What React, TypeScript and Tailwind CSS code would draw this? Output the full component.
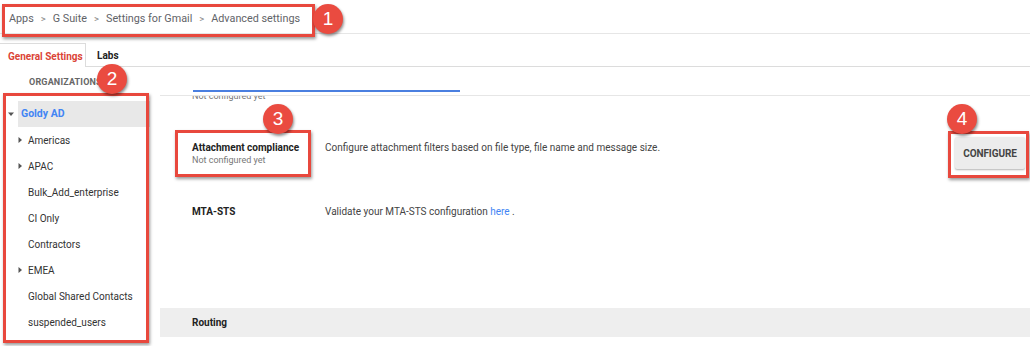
import React from "react";

const tree: { label: string; caret?: boolean }[] = [
  { label: "Americas", caret: true },
  { label: "APAC", caret: true },
  { label: "Bulk_Add_enterprise" },
  { label: "CI Only" },
  { label: "Contractors" },
  { label: "EMEA", caret: true },
  { label: "Global Shared Contacts" },
  { label: "suspended_users" },
];

const crumbs = ["Apps", "G Suite", "Settings for Gmail", "Advanced settings"];

function Caret({ down }: { down?: boolean }) {
  return (
    <svg width="6" height="6" viewBox="0 0 6 6" className="text-[#555]">
      {down ? <path d="M0 1.5h6L3 5z" fill="currentColor" /> : <path d="M1.5 0v6L5 3z" fill="currentColor" />}
    </svg>
  );
}

function Badge({ n, className }: { n: number; className: string }) {
  return (
    <div
      className={
        "absolute flex h-[30px] w-[30px] items-center justify-center rounded-full bg-[#ea4b40] text-[19px] text-white shadow-[1px_2px_3px_rgba(0,0,0,0.45)] " +
        className
      }
      style={{ fontFamily: "'Liberation Sans', Arial, sans-serif" }}
    >
      {n}
    </div>
  );
}

function Frame({ className }: { className: string }) {
  return (
    <div
      className={
        "pointer-events-none absolute border-[3px] border-[#e8483d] shadow-[1px_2px_3px_rgba(0,0,0,0.4)] " + className
      }
    />
  );
}

export default function App() {
  return (
    <div
      className="relative h-[346px] w-[1030px] overflow-hidden bg-white text-[#333]"
      style={{ fontFamily: "Roboto, 'Liberation Sans', Arial, sans-serif" }}
    >
      {/* Breadcrumb */}
      <div className="flex h-[34px] items-center gap-[7px] border-b border-[#e6e6e6] pl-[9px] pt-[6px] text-[10.8px] text-[#5f6368]">
        {crumbs.map((c, i) => (
          <React.Fragment key={c}>
            {i > 0 && <span className="text-[9.5px] text-[#888]">&gt;</span>}
            <span>{c}</span>
          </React.Fragment>
        ))}
      </div>

      {/* Tabs */}
      <div className="mt-[9px] flex h-[24px] text-[10px] font-bold">
        <div className="flex w-[86px] items-center border-t border-r border-[#dcdcdc] pl-[8px] pt-[1px] text-[#db4437]">
          General Settings
        </div>
        <div className="flex flex-1 items-center border-b border-[#dcdcdc] pl-[11px] pt-[1px] text-[#222]">Labs</div>
      </div>

      <div className="flex">
        {/* Organizations tree */}
        <div className="w-[150px] shrink-0">
          <div className="flex h-[34px] items-center pb-[3px] pl-[29px] text-[9px] font-bold tracking-[0.02em] text-[#666]">
            ORGANIZATIONS
          </div>
          <div className="flex h-[26px] items-center">
            <div className="flex w-[18px] justify-center pl-[3px]">
              <Caret down />
            </div>
            <div className="flex h-full flex-1 items-center bg-[#e8e8e8] pl-[3px] text-[10.5px] font-bold text-[#4285f4]">
              Goldy AD
            </div>
          </div>
          {tree.map((t) => (
            <div key={t.label} className="flex h-[26px] items-center text-[10px] text-[#333]">
              <div className="flex w-[28px] justify-end pr-[5px]">{t.caret && <Caret />}</div>
              {t.label}
            </div>
          ))}
        </div>

        {/* Settings list */}
        <div className="flex-1 pl-[10px]">
          <div className="h-[29px] border-b border-[#e6e6e6] pt-[23px]">
            <div className="ml-[33px] h-[2px] w-[267px] bg-[#4a7fe0]" />
          </div>
          <div className="h-[34px] overflow-hidden">
            <div className="-mt-[6px] pl-[32px] text-[9px] leading-[12px] text-[#777]">Not configured yet</div>
          </div>

          <div className="flex h-[48px]">
            <div className="w-[165px] shrink-0 pl-[32px] pt-[12px]">
              <div className="text-[10px] font-bold leading-[12px] text-[#222]">Attachment compliance</div>
              <div className="text-[9px] leading-[12px] text-[#777]">Not configured yet</div>
            </div>
            <div className="pt-[12px] text-[10px] leading-[12px] text-[#444]">
              Configure attachment filters based on file type, file name and message size.
            </div>
            <button className="ml-auto mr-[5px] mt-[7px] h-[32px] w-[70px] rounded-[2px] bg-[#ececec] text-[10px] font-bold tracking-[-0.01em] text-[#444] shadow-[0_1px_2px_rgba(0,0,0,0.3)]">
              CONFIGURE
            </button>
          </div>

          <div className="flex pt-[28px]">
            <div className="w-[165px] shrink-0 pl-[32px] text-[10px] font-bold leading-[12px] text-[#222]">MTA-STS</div>
            <div className="text-[10px] leading-[12px] text-[#444]">
              Validate your MTA-STS configuration <span className="text-[#4285f4]">here</span> .
            </div>
          </div>

          <div className="mt-[90px] flex h-[29px] items-center bg-[#eeeeee] pl-[32px] text-[10px] font-bold text-[#222]">
            Routing
          </div>
        </div>
      </div>

      {/* Annotations */}
      <Frame className="left-[2px] top-[4px] h-[33px] w-[313px]" />
      <Frame className="left-[3px] top-[93px] h-[250px] w-[146px]" />
      <Frame className="left-[175px] top-[130px] h-[47px] w-[136px]" />
      <Frame className="left-[948px] top-[131px] h-[47px] w-[81px]" />
      <Badge n={1} className="left-[313px] top-[4px]" />
      <Badge n={2} className="left-[97px] top-[64px]" />
      <Badge n={3} className="left-[263px] top-[104px]" />
      <Badge n={4} className="left-[947px] top-[104px]" />
    </div>
  );
}
